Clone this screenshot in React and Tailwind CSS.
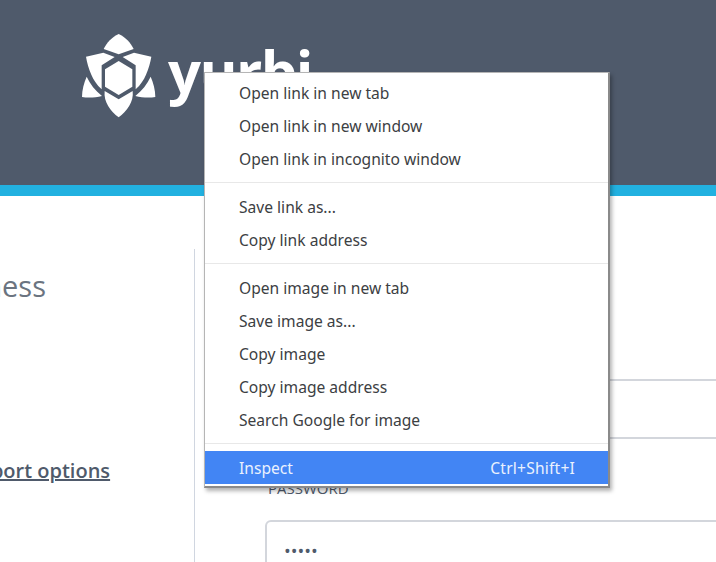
import React from 'react';

const menuGroups = [
  ['Open link in new tab', 'Open link in new window', 'Open link in incognito window'],
  ['Save link as...', 'Copy link address'],
  ['Open image in new tab', 'Save image as...', 'Copy image', 'Copy image address', 'Search Google for image'],
];

// Logo mark, coordinates taken from a 3x crop of the reference
const YurbiMark = () => (
  <svg width="90" height="94" viewBox="0 0 270 282" className="shrink-0" fill="#fff">
    <path d="M128 18 C148 28 164 44 173 63 L128 79 L83 63 C92 44 108 28 128 18Z" />
    <path d="M30 86 L82 74 L116 87 L77 112 L77 184 C62 170 53 156 46 140 C38 122 33 104 30 86Z" />
    <path d="M226 86 L174 74 L140 87 L179 112 L179 184 C194 170 203 156 210 140 C218 122 223 104 226 86Z" />
    <path d="M128 99 L169 124 L169 176 L128 201 L87 176 L87 124Z" />
    <path d="M32 146 C42 168 58 188 78 204 C58 209 36 210 18 207 C18 186 24 164 32 146Z" />
    <path d="M224 146 C214 168 198 188 178 204 C198 209 220 210 238 207 C238 186 232 164 224 146Z" />
    <path d="M86 189 L128 214 L170 189 C174 222 152 250 128 268 C104 250 82 222 86 189Z" />
  </svg>
);

const MenuItem = ({ label, shortcut, active }) => (
  <div className={`flex h-[33px] items-center justify-between pl-[34px] pr-[33px] ${active ? 'bg-[#4285f4] pt-[2px] text-[#eaf1fe]' : 'text-[#3c4043]'}`}>
    <span>{label}</span>
    {shortcut && <span className="tracking-[0.2px]">{shortcut}</span>}
  </div>
);

const ContextMenu = () => (
  <div className="absolute left-[204px] top-[72px] w-[406px] border border-[#b5b5b5] border-r-2 border-b-2 border-r-[#8a8a8a] border-b-[#8a8a8a] bg-white pb-[2px] pt-[3px] text-[15.6px] shadow-[2px_3px_4px_rgba(0,0,0,0.3)] [font-family:'Noto_Sans',sans-serif]">
    {menuGroups.map((group, i) => (
      <div key={i} className="mb-[7px] border-b border-[#e8e8e8] pb-[6px] pt-[1px]">
        {group.map((label) => <MenuItem key={label} label={label} />)}
      </div>
    ))}
    <MenuItem label="Inspect" shortcut="Ctrl+Shift+I" active />
  </div>
);

export default function App() {
  return (
    <div className="relative h-[562px] w-[716px] overflow-hidden bg-white [font-family:'Open_Sans',sans-serif]">
      {/* Header */}
      <header className="flex h-[196px] items-start gap-[2px] border-b-[11px] border-[#22b1e0] bg-[#4f5a6b] pl-[76px] pt-[28px]">
        <YurbiMark />
        <span className="mt-[3px] text-[58px] font-bold leading-[80px] tracking-[-1.6px] text-white">yurbi</span>
      </header>

      <div className="flex">
        {/* Left column */}
        <div className="mt-[53px] h-[313px] w-[195px] shrink-0 overflow-hidden border-r border-[#d0d6e0]">
          <p className="ml-[-214px] mt-[19px] w-[260px] whitespace-nowrap text-right text-[29px] leading-[36px] text-[#6b7480]">Business</p>
          <a className="ml-[-44px] mt-[154px] block whitespace-nowrap text-[20px] font-semibold leading-[26px] text-[#4f5a6b] underline">support options</a>
        </div>

        {/* Login form */}
        <div className="ml-[73px] flex-1 pt-[183px]">
          <div className="h-[60px] w-[500px] rounded-[6px] border-2 border-[#d3d6dc]" />
          <p className="mt-[38px] text-[15px] leading-[22px] text-[#4f5a6b]">PASSWORD</p>
          <div className="-ml-[3px] mt-[21px] h-[70px] w-[500px] rounded-[6px] border-2 border-[#d3d6dc] pl-[17px] pt-[15px] text-[18px] leading-[28px] text-[#4f5a6b]">•••••</div>
        </div>
      </div>

      <ContextMenu />
    </div>
  );
}
